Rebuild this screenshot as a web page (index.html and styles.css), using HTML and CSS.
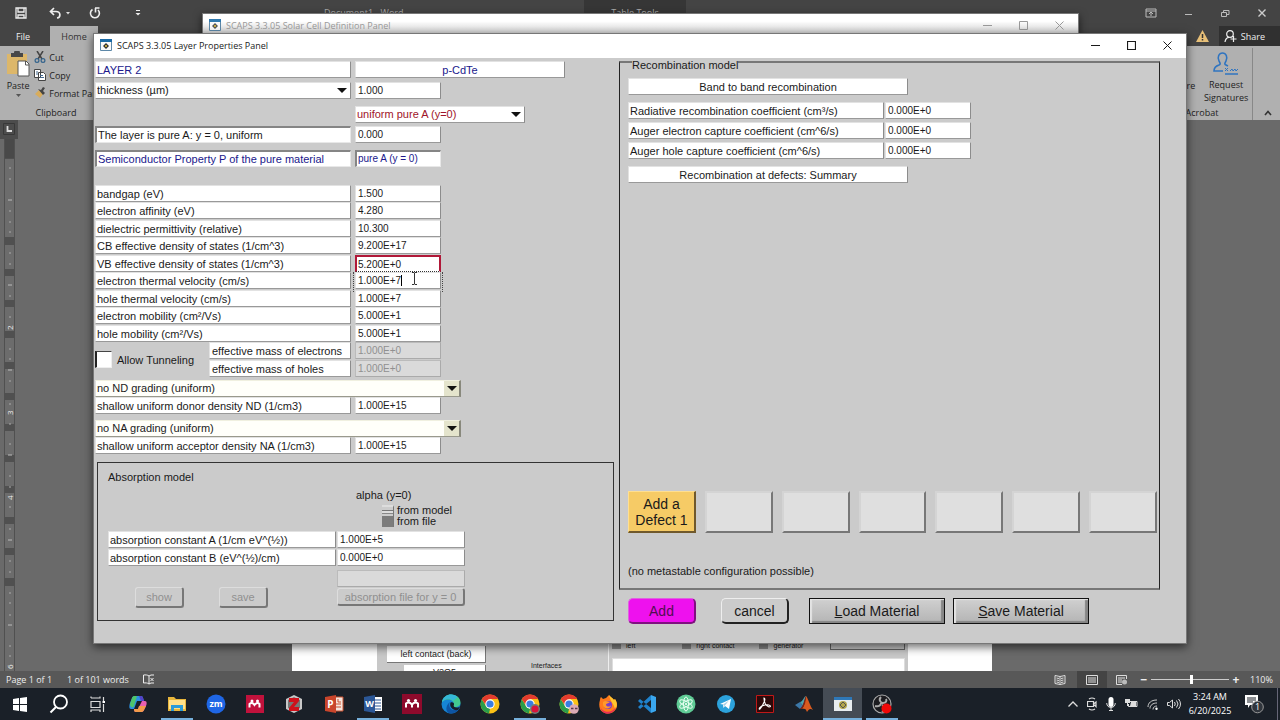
FILE: index.html
```html
<!DOCTYPE html>
<html lang="en">
<head>
<meta charset="utf-8">
<title>SCAPS 3.3.05 Layer Properties Panel</title>
<link rel="stylesheet" href="styles.css">
</head>
<body>
<div class="desktop">
  <div class="word">
    <header class="word-title">
      <div class="quick">
        <button class="ico" aria-label="Save file"><svg width="12" height="12" viewBox="0 0 12 12"><path d="M1 1h10v10H1zM3 1v4h6V1M3 11V8h6v3" fill="none" stroke="#eee" stroke-width="1.3"/></svg></button>
        <button class="ico" aria-label="Undo"><svg width="22" height="12" viewBox="0 0 22 12"><path d="M5 1 1.500 4.500 5 8M2 4.500h5c5 0 5 6 1 6.500" fill="none" stroke="#eee" stroke-width="1.700"/><path d="M17 5h4l-2 2.500z" fill="#ddd"/></svg></button>
        <button class="ico" aria-label="Redo"><svg width="12" height="12" viewBox="0 0 12 12"><path d="M3.500 2.500A4.500 4.500 0 1 0 9 3M6 1h4.500M6.500 1v4.500" fill="none" stroke="#eee" stroke-width="1.600"/></svg></button>
        <button class="ico more" aria-label="More commands"><svg width="6" height="8" viewBox="0 0 6 8"><path d="M1 1.500h4" stroke="#eee"/><path d="M.5 4h5L3 6.500z" fill="#eee"/></svg></button>
      </div>
      <div class="doc-name">Document1 - Word</div>
      <div class="table-tools">Table Tools</div>
      <div class="word-controls">
        <button class="ico" aria-label="Ribbon options"><svg width="12" height="10" viewBox="0 0 12 10"><path d="M1 1h10v8H1zM1 3h10M6 8V4.500M4 6l2-2 2 2" fill="none" stroke="#bbb"/></svg></button>
        <button class="ico" aria-label="Minimize Word"><svg width="8" height="10" viewBox="0 0 8 10"><path d="M0 6.500h7" stroke="#bbb"/></svg></button>
        <button class="ico" aria-label="Restore Word"><svg width="9" height="9" viewBox="0 0 9 9"><path d="M.5 3.500h5v4h-5zM2.500 3V1.500h5.500v4H6" fill="none" stroke="#bbb"/></svg></button>
        <button class="ico" aria-label="Close Word"><svg width="8" height="8" viewBox="0 0 8 8"><path d="m.5.5 7 7m0-7-7 7" stroke="#ccc" stroke-width="1.400"/></svg></button>
      </div>
    </header>
    <nav class="tabs">
      <button class="tab">File</button>
      <button class="tab on">Home</button>
      <span class="grow"></span>
      <svg class="warn" width="13" height="12" viewBox="0 0 13 12"><path d="M6.500 0 13 12H0z" fill="#e8c078"/><path d="M6.500 4v4M6.500 9v1.500" stroke="#333" stroke-width="1.500"/></svg>
      <button class="share"><svg width="13" height="12" viewBox="0 0 13 12"><circle cx="6" cy="4" r="3.300" fill="none" stroke="#eee" stroke-width="1.200"/><path d="M1 12c.4-3 2-4.500 4-4.700M9.500 6v6M6.500 9h6" stroke="#eee" stroke-width="1.200" fill="none"/></svg>Share</button>
    </nav>
    <div class="ribbon">
      <div class="clipboard">
        <div class="clip-body">
          <button class="paste"><svg width="24" height="26" viewBox="0 0 24 26"><path d="M1 3h20v20H1z" fill="#ddb76a"/><path d="M5 2h3a3 3 0 0 1 6 0h3v4H5z" fill="#484848"/><path d="M12 10h8l3 3v12H12z" fill="#fff" stroke="#555"/><path d="M19.500 10v4H23" fill="none" stroke="#555"/></svg><span>Paste</span><svg width="5" height="4" viewBox="0 0 5 4"><path d="M0 0h5L2.500 3z" fill="#555"/></svg></button>
          <div class="clip-list">
            <button><svg width="12" height="12" viewBox="0 0 12 12"><path d="m3 0 5 8M9 0 4 8" stroke="#444" stroke-width="1.500"/><circle cx="3" cy="9.500" r="1.900" fill="none" stroke="#33638c" stroke-width="1.200"/><circle cx="9" cy="9.500" r="1.900" fill="none" stroke="#33638c" stroke-width="1.200"/></svg>Cut</button>
            <button><svg width="12" height="12" viewBox="0 0 12 12"><path d="M.5.5h6v8h-6zM4.500 3.500h5l2 2v6h-7z" fill="#fff" stroke="#444"/><path d="M6 6.500h3M6 8.500h4M2 3h2M2 5h2" stroke="#446a90"/></svg>Copy</button>
            <button><svg width="12" height="12" viewBox="0 0 12 12"><path d="M1 7 5 3l4 4-3 4z" fill="#d8ac5c"/><path d="m4 2 5 6 2-2-2-2 2-3-2-1-2 3z" fill="#444"/></svg>Format Painter</button>
          </div>
        </div>
        <div class="caption">Clipboard</div>
      </div>
      <div class="acrobat">
        <div class="acro-body">
          <div class="cut-word">Share</div>
          <button class="request"><svg width="26" height="24" viewBox="0 0 26 24"><path d="M10 19H1c0-4 2-5 5-6 2-1 1-2 0-4-2-4 0-8 3.500-8S15 5 13 9c-1 2-2 3 0 4l2 1M12 22h13" fill="none" stroke="#2f74c0" stroke-width="1.600"/><path d="m12 16 3 3m0-3-3 3m5 0 2-2 1 2 2-2 1 2 2-2" fill="none" stroke="#2f74c0"/></svg><span>Request<br>Signatures</span></button>
        </div>
        <div class="caption">Acrobat</div>
      </div>
      <div class="ribbon-end"><svg width="8" height="6" viewBox="0 0 8 6"><path d="m1 5 3-3.500L7 5" fill="none" stroke="#333" stroke-width="1.600"/></svg></div>
    </div>
    <div class="doc">
      <div class="ruler">
        <div class="corner"><svg width="12" height="12" viewBox="0 0 12 12"><path d="M.5.5h11v11H.5z" fill="none" stroke="#383838"/><path d="M4.500 3v5H9" fill="none" stroke="#ddd" stroke-width="1.800"/></svg></div>
        <svg width="11" height="532" viewBox="0 0 11 532">
          <path d="M0 0h11v532H0z" fill="#505050"/><path d="M1 0h9v19H1z" fill="#494949"/>
          <path d="M1 20h9v78H1zM1 106h9v24H1zM1 137h9v24H1zM1 168h9v24H1zM1 199h9v24H1zM1 230h9v24H1zM1 261h9v24H1zM1 292h9v24H1zM1 323h9v24H1zM1 354h9v24H1zM1 385h9v24H1zM1 416h9v23H1zM1 447h9v85H1z" fill="#6c6c6c"/>
          <path d="M5 29h2M5 40h2M5 72h2M5 83h2M5 93h2M5 114h2M5 125h2M5 157h2M5 178h2M5 210h2M5 220h2M5 242h2M5 265h2M5 285h2M5 305h2M5 337h2M5 348h2M5 368h2M5 390h2M5 422h2M5 433h2M5 454h2M5 464h2M5 476h2M5 507h2M5 517h2" stroke="#aaa"/>
          <path d="M4 61h4M4 146h4M4 231h4M4 316h4M4 401h4M4 486h4" stroke="#bbb"/>
          <g fill="#eee" font-family="Open Sans, sans-serif" font-size="8"><text transform="translate(9 191) rotate(-90)">2</text><text transform="translate(9 276) rotate(-90)">3</text><text transform="translate(9 361) rotate(-90)">4</text><text transform="translate(9 530) rotate(-90)">6</text></g>
        </svg>
      </div>
      <div class="page">
        <div class="figure">
          <div class="fig-contacts"><span>left contact (back)</span><span class="short">V2O5</span></div>
          <div class="fig-mid">Interfaces</div>
          <div class="fig-right">
            <div class="fig-checks"><i></i>left<i></i>right contact<i></i>generator<b></b></div>
            <div class="fig-box"></div>
          </div>
        </div>
      </div>
    </div>
    <footer class="status">
      <span class="pages">Page 1 of 1</span><span>1 of 101 words</span>
      <svg class="proof" width="12" height="11" viewBox="0 0 12 11"><path d="M6 2C4.500.8 2.500.8.5 1v8c2-.3 4-.2 5.500 1V2l2-1h3M6 10l2-1h3M7.500 4l3 3m0-3-3 3" fill="none" stroke="#eee"/></svg>
      <span class="grow"></span>
      <button class="view" aria-label="Read mode"><svg width="12" height="10" viewBox="0 0 12 10"><path d="M6 1.500 1 .5v8l5 1 5-1v-8zv8M2.500 3 5 3.500M2.500 5 5 5.500M2.500 7 5 7.500M9.500 3 7 3.500M9.500 5 7 5.500M9.500 7 7 7.500" fill="none" stroke="#ddd"/></svg></button>
      <button class="view on" aria-label="Print layout"><svg width="12" height="10" viewBox="0 0 12 10"><path d="M.5.5h11v9H.5zM2 3h8M2 5h8M2 7h8" fill="none" stroke="#ddd"/></svg></button>
      <button class="view" aria-label="Web layout"><svg width="12" height="10" viewBox="0 0 12 10"><path d="M10.500 4V.5H.5v9H6M2 3h7M2 5h4M2 7h4" fill="none" stroke="#ddd"/><circle cx="8.500" cy="7" r="2.500" fill="#bbb"/></svg></button>
      <span class="sign">−</span><input class="zoom" type="range" min="0" max="100" value="52" aria-label="Zoom"><span class="sign">+</span><span class="pct">110%</span>
    </footer>
  </div>

  <section class="win back" aria-label="Solar Cell Definition Panel">
    <div class="bar">
      <svg width="12" height="12" viewBox="0 0 12 12"><path d="M.5.5h11v11H.5z" fill="#fafafa" stroke="#5d88a8"/><path d="M0 0h12v3H0z" fill="#2f79ae"/><path d="m6 4 3 3-3 3-3-3z" fill="#555"/><circle cx="6" cy="7" r="1" fill="#e8c840"/></svg>
      <h2>SCAPS 3.3.05 Solar Cell Definition Panel</h2>
      <div class="ctl"><button aria-label="Minimize panel"><svg width="9" height="9" viewBox="0 0 9 9"><path d="M0 4.500h9" stroke="currentColor"/></svg></button><button aria-label="Maximize panel"><svg width="9" height="9" viewBox="0 0 9 9"><path d="M.5.5h8v8h-8z" fill="none" stroke="currentColor"/></svg></button><button aria-label="Close panel"><svg width="9" height="9" viewBox="0 0 9 9"><path d="m.5.5 8 8m0-8-8 8" stroke="currentColor"/></svg></button></div>
    </div>
  </section>

  <section class="win front" aria-label="Layer Properties Panel">
    <div class="bar">
      <svg width="12" height="12" viewBox="0 0 12 12"><path d="M.5.5h11v11H.5z" fill="#fafafa" stroke="#5d88a8"/><path d="M0 0h12v3H0z" fill="#1a6aa5"/><path d="m6 4 3 3-3 3-3-3z" fill="#333"/><circle cx="6" cy="7" r="1" fill="#e8c840"/></svg>
      <h1>SCAPS 3.3.05 Layer Properties Panel</h1>
      <div class="ctl"><button aria-label="Minimize"><svg width="9" height="9" viewBox="0 0 9 9"><path d="M0 4.500h9" stroke="currentColor"/></svg></button><button aria-label="Maximize"><svg width="9" height="9" viewBox="0 0 9 9"><path d="M.5.5h8v8h-8z" fill="none" stroke="currentColor" stroke-width="1.200"/></svg></button><button aria-label="Close"><svg width="9" height="9" viewBox="0 0 9 9"><path d="m.5.5 8 8m0-8-8 8" stroke="currentColor"/></svg></button></div>
    </div>
    <div class="body">
      <form class="left">
        <div class="row name"><label class="cell blue" for="lname">LAYER 2</label><input class="cell blue center" id="lname" value="p-CdTe"></div>
        <div class="row thick"><span class="drop"><select class="cell" aria-label="Thickness unit"><option>thickness (µm)</option></select></span><input class="cell" aria-label="Thickness" value="1.000"></div>
        <div class="row comp"><span></span><span class="drop wide"><select class="cell red" aria-label="Composition"><option>uniform pure A (y=0)</option></select></span></div>
        <div class="row ylay"><label class="cell inset" for="y">The layer is pure A: y = 0, uniform</label><input class="cell" id="y" value="0.000"></div>
        <div class="row semi"><div class="cell inset blue">Semiconductor Property P of the pure material</div><div class="cell inset blue value">pure A (y = 0)</div></div>
        <div class="props">
          <div class="row"><label class="cell" for="p1">bandgap (eV)</label><input class="cell" id="p1" value="1.500"></div>
          <div class="row"><label class="cell" for="p2">electron affinity (eV)</label><input class="cell" id="p2" value="4.280"></div>
          <div class="row"><label class="cell" for="p3">dielectric permittivity (relative)</label><input class="cell" id="p3" value="10.300"></div>
          <div class="row"><label class="cell" for="p4">CB effective density of states (1/cm^3)</label><input class="cell" id="p4" value="9.200E+17"></div>
          <div class="row"><label class="cell" for="p5">VB effective density of states (1/cm^3)</label><input class="cell marked" id="p5" value="5.200E+0"></div>
          <div class="row"><label class="cell" for="p6">electron thermal velocity (cm/s)</label><span class="active"><input class="cell" id="p6" value="1.000E+7"><i class="caret"></i><svg class="ibeam" width="7" height="13" viewBox="0 0 7 13"><path d="M1 .5h2l.5 1 .5-1h2M3.500 1v11M1 12.500h2l.5-1 .5 1h2" fill="none" stroke="#333"/></svg></span></div>
          <div class="row"><label class="cell" for="p7">hole thermal velocity (cm/s)</label><input class="cell" id="p7" value="1.000E+7"></div>
          <div class="row"><label class="cell" for="p8">electron mobility (cm²/Vs)</label><input class="cell" id="p8" value="5.000E+1"></div>
          <div class="row"><label class="cell" for="p9">hole mobility (cm²/Vs)</label><input class="cell" id="p9" value="5.000E+1"></div>
        </div>
        <div class="tunnel">
          <label class="allow"><input type="checkbox">Allow Tunneling</label>
          <div class="masses">
            <div class="mrow"><label class="cell" for="m1">effective mass of electrons</label><input class="cell" id="m1" value="1.000E+0" disabled></div>
            <div class="mrow"><label class="cell" for="m2">effective mass of holes</label><input class="cell" id="m2" value="1.000E+0" disabled></div>
          </div>
        </div>
        <div class="grading">
          <span class="drop cream"><select class="cell" aria-label="ND grading"><option>no ND grading (uniform)</option></select></span>
          <div class="row"><label class="cell" for="nd">shallow uniform donor density ND (1/cm3)</label><input class="cell" id="nd" value="1.000E+15"></div>
        </div>
        <div class="grading">
          <span class="drop cream"><select class="cell" aria-label="NA grading"><option>no NA grading (uniform)</option></select></span>
          <div class="row"><label class="cell" for="na">shallow uniform acceptor density NA (1/cm3)</label><input class="cell" id="na" value="1.000E+15"></div>
        </div>
        <section class="absorb">
          <h3>Absorption model</h3>
          <div class="alpha">
            <span>alpha (y=0)</span>
            <div class="switch"><input type="checkbox" id="sw" checked><label for="sw">from model<br>from file</label></div>
          </div>
          <div class="agrid">
            <label class="cell" for="aa">absorption constant A (1/cm eV^(½))</label><input class="cell" id="aa" value="1.000E+5">
            <label class="cell" for="ab">absorption constant B (eV^(½)/cm)</label><input class="cell" id="ab" value="0.000E+0">
          </div>
          <div class="afoot">
            <div class="abtns"><button type="button" class="soft" disabled>show</button><button type="button" class="soft" disabled>save</button></div>
            <div class="afile"><input class="cell" aria-label="Absorption file" disabled><button type="button" class="soft" disabled>absorption file for y = 0</button></div>
          </div>
        </section>
      </form>
      <div class="right">
        <fieldset>
          <legend>Recombination model</legend>
          <div class="cell center head">Band to band recombination</div>
          <div class="rgrid">
            <label class="cell" for="r1">Radiative recombination coefficient (cm³/s)</label><input class="cell" id="r1" value="0.000E+0">
            <label class="cell" for="r2">Auger electron capture coefficient (cm^6/s)</label><input class="cell" id="r2" value="0.000E+0">
            <label class="cell" for="r3">Auger hole capture coefficient (cm^6/s)</label><input class="cell" id="r3" value="0.000E+0">
          </div>
          <div class="cell center head">Recombination at defects: Summary</div>
          <div class="defects">
            <button class="add-defect">Add a Defect 1</button>
            <button disabled aria-label="Defect 2"></button><button disabled aria-label="Defect 3"></button><button disabled aria-label="Defect 4"></button><button disabled aria-label="Defect 5"></button><button disabled aria-label="Defect 6"></button><button disabled aria-label="Defect 7"></button>
          </div>
          <p>(no metastable configuration possible)</p>
        </fieldset>
        <div class="actions">
          <button class="round add">Add</button><button class="round">cancel</button><button class="big"><u>L</u>oad Material</button><button class="big"><u>S</u>ave Material</button>
        </div>
      </div>
    </div>
  </section>

  <footer class="taskbar">
    <div class="apps">
      <button aria-label="Start"><svg viewBox="0 0 20 20"><path d="M3 5l6-1v6H3zM10 4l7-1v7h-7zM3 11h6v6l-6-1zM10 11h7v7l-7-1z" fill="#fff"/></svg></button>
      <button aria-label="Search"><svg viewBox="0 0 20 20"><circle cx="11.500" cy="8" r="6.500" fill="none" stroke="#fff" stroke-width="1.800"/><path d="m7 13-5.500 5.500" stroke="#fff" stroke-width="2"/></svg></button>
      <button aria-label="Task view"><svg viewBox="0 0 20 20"><path d="M3 4V2.500M3 4h9V2.500M3 7.500h9v6H3zM3 18v-2h9v2M15.500 3v4M15.500 10v8" fill="none" stroke="#ddd" stroke-width="1.200"/><path d="M14.500 7h2.500v2h-2.500z" fill="#fff"/></svg></button>
      <button aria-label="Copilot"><svg viewBox="0 0 20 20"><path d="M7 2h6c2 0 2 2 3 5H9l-3 8H3c-2 0-2-3-1-6l2-5c.6-1.400 1.500-2 3-2z" fill="#2b8fe0"/><path d="M2 10 4 4c.6-1.400 1.500-2 3-2h2L6 12c-.5 2-4 2-4-2z" fill="#4fc46a"/><path d="M14 7h3c2 0 2 3 1 5l-2 4c-.7 1.500-1.500 2-3 2H8c-2 0-2-2-2-3h4z" fill="#e95fb0"/><path d="m10 15 1-3h7l-2 4c-.7 1.500-1.500 2-3 2H8c-2 0-2-2-2-3z" fill="#f39a4a"/><path d="M11 2h2c2 0 2 2 3 5h-3z" fill="#5442c8"/></svg></button>
      <button class="open" aria-label="File Explorer"><svg viewBox="0 0 20 20"><path d="M1 3h6l2 2h10v12H1z" fill="#e8b63c"/><path d="M2 6h16v9H2z" fill="#ffe08a"/><path d="M4 17v-6h12v6h-3v-3H7v3z" fill="#2b9bd8"/></svg></button>
      <button aria-label="Zoom"><svg viewBox="0 0 20 20"><circle cx="10" cy="10" r="9.500" fill="#1f66e5"/><text x="10" y="13" text-anchor="middle" font-size="9" font-weight="bold" fill="#fff">zm</text></svg></button>
      <button aria-label="Mendeley"><svg viewBox="0 0 20 20"><path d="M1 1h18v18H1z" fill="#c1123c"/><path d="M4.500 13.500V10q2.700-2.500 5 1 2.700-3.500 5-1v3.500" fill="none" stroke="#fff" stroke-width="2"/><circle cx="7" cy="7" r="1.500" fill="#fff"/><circle cx="12.500" cy="7" r="1.500" fill="#fff"/></svg></button>
      <button aria-label="Zotero"><svg viewBox="0 0 20 20"><path d="m10 1 8 4v10l-8 4-8-4V5z" fill="#c8c8c8"/><path d="m4 6 6-3 6 3v8l-6 3-6-3z" fill="#777"/><path d="M5 4h10v3l-5 6h5v4H5v-3l5-6H5z" fill="#cf111b"/></svg></button>
      <button aria-label="PowerPoint"><svg viewBox="0 0 20 20"><path d="M10 3h9v14h-9z" fill="#f4e4dc" stroke="#c9502f"/><path d="M12 10h5M12 13h5M14 5v3h3" stroke="#c9502f" fill="none"/><path d="m1 3 11-2v18L1 17z" fill="#c9452b"/><text x="6.500" y="13.500" text-anchor="middle" font-size="10" font-weight="bold" fill="#fff">P</text></svg></button>
      <button class="open" aria-label="Word"><svg viewBox="0 0 20 20"><path d="M10 3h9v14h-9z" fill="#fff"/><path d="M12 6h6M12 9h6M12 12h6M12 15h6" stroke="#2b5797"/><path d="m1 3 11-2v18L1 17z" fill="#2b5797"/><text x="6.500" y="13" text-anchor="middle" font-size="9" font-weight="bold" fill="#fff">W</text></svg></button>
      <button aria-label="Mendeley Desktop"><svg viewBox="0 0 20 20"><path d="M0 0h20v20H0z" fill="#8e0a2c"/><path d="M4 13.500v-4q3-2.500 6 1 3-3.500 6-1v4M10 10v3.500" fill="none" stroke="#fff" stroke-width="2"/><circle cx="6.500" cy="6.500" r="1.600" fill="#fff"/><circle cx="13.500" cy="6.500" r="1.600" fill="#fff"/></svg></button>
      <button aria-label="Edge"><svg viewBox="0 0 20 20"><circle cx="10" cy="10" r="9.500" fill="#1685d4"/><path d="M1 8C2 3 6 .5 10 .5c6 0 9.500 4 9.500 8 0 3-2.500 4.500-5 4.500-3 0-2-2-1.500-3 0-3-4-5-7-4.500C3 6 1 8 1 8z" fill="#43c98f"/><path d="M1 8c1-5 5-7.500 9-7.500 3 0 5 1 6.500 2.500L12 7C8 3 4 5 1 8z" fill="#35b7d8"/><path d="M9 8c-2 3 0 8 4 8 2 0 4-.5 5-1-2 3-5 4.500-8 4.500-6 0-6-8-1-11.500z" fill="#0d55a5"/><path d="M9.500 8.500c2-1 4 .5 3.500 2-1 2 0 3 3 3 1.500 0 3-.6 3.500-1.500L17 16c-5 1-9-3-7.500-7.500z" fill="#171e27"/></svg></button>
      <button aria-label="Chrome"><svg viewBox="0 0 20 20"><circle cx="10" cy="10" r="9.500" fill="#fbc116"/><path d="M1.800 5.200 6 12l4 3-1 4.500A9.500 9.500 0 0 1 1.800 5.200z" fill="#2a9d4b"/><path d="M1.800 5.200 6 11l4-6h8.200A9.500 9.500 0 0 0 1.800 5.200z" fill="#e33b2e"/><circle cx="10" cy="10" r="4.700" fill="#fff"/><circle cx="10" cy="10" r="3.600" fill="#3b7de0"/></svg></button>
      <button class="open" aria-label="Chrome, recording"><svg viewBox="0 0 20 20"><circle cx="10" cy="10" r="9.500" fill="#fbc116"/><path d="M1.800 5.200 6 12l4 3-1 4.500A9.500 9.500 0 0 1 1.800 5.200z" fill="#2a9d4b"/><path d="M1.800 5.200 6 11l4-6h8.200A9.500 9.500 0 0 0 1.800 5.200z" fill="#e33b2e"/><circle cx="10" cy="10" r="4.700" fill="#fff"/><circle cx="10" cy="10" r="3.600" fill="#3b7de0"/><circle cx="15" cy="15" r="5" fill="#6f7f7c"/><circle cx="15" cy="15" r="3.600" fill="#d8143c"/></svg></button>
      <button aria-label="Chrome, profile"><svg viewBox="0 0 20 20"><circle cx="10" cy="10" r="9.500" fill="#fbc116"/><path d="M1.800 5.200 6 12l4 3-1 4.500A9.500 9.500 0 0 1 1.800 5.200z" fill="#2a9d4b"/><path d="M1.800 5.200 6 11l4-6h8.200A9.500 9.500 0 0 0 1.800 5.200z" fill="#e33b2e"/><circle cx="10" cy="10" r="4.700" fill="#fff"/><circle cx="10" cy="10" r="3.600" fill="#3b7de0"/><circle cx="15" cy="15" r="4.800" fill="#dcaab4"/><path d="M12 14.500h2.500M16 14.500h2.500" stroke="#553a50" stroke-width="1.500"/></svg></button>
      <button aria-label="Firefox"><svg viewBox="0 0 20 20"><path d="M2 6c0-2 1-3 1-3l2 2 3-1 3-3c1 2 4 3 5 5l1-1c2 3 3 7 1 10-4 7-14 5-16 0-1-3-1-6 0-9z" fill="#ff7a1c"/><path d="M11 1c1 2 4 3 5 5l1-1c2 3 3 7 0 10-1-5-5-8-6-14z" fill="#ffc62e"/><path d="M2 12c2 7 12 8 16 1-2 8-14 10-16-1z" fill="#ec2f55"/><circle cx="10" cy="11" r="4" fill="#7a3ac8"/><path d="M5 8c3-2 5 0 7 0-2 2-4 1-4 3 1 2 4 2 5 0 0 4-7 5-8 0z" fill="#ff9a2a"/></svg></button>
      <button aria-label="Visual Studio Code"><svg viewBox="0 0 20 20"><path d="m14 1 5 2v14l-5 2z" fill="#3aa7ef"/><path d="M14 1v5L3 15l-2-2zM14 19v-5L3 5 1 7z" fill="#1f82cc"/></svg></button>
      <button aria-label="Atom"><svg viewBox="0 0 20 20"><circle cx="10" cy="10" r="9.500" fill="#5fcb95"/><g fill="none" stroke="#e6fff0"><ellipse cx="10" cy="10" rx="2.500" ry="7"/><ellipse cx="10" cy="10" rx="2.500" ry="7" transform="rotate(60 10 10)"/><ellipse cx="10" cy="10" rx="2.500" ry="7" transform="rotate(-60 10 10)"/></g><circle cx="10" cy="10" r="1" fill="#fff"/></svg></button>
      <button aria-label="Telegram"><svg viewBox="0 0 20 20"><circle cx="10" cy="10" r="9" fill="#2ca2dc"/><path d="m4 10 11-5-2 10-4-3-1.500 2-.5-3.500z" fill="#fff"/><path d="m7 10.500 6-4-4.500 5.500z" fill="#a8cfe4"/></svg></button>
      <button aria-label="Acrobat Reader"><svg viewBox="0 0 20 20"><path d="M1.500 1.500h17v17h-17z" fill="#2d0a0a" stroke="#c01818"/><path d="M9 4c2 0 0 6-4 11-2 1 0-3 5-4s7 2 4 2c-3-1-5-5-5-9z" fill="none" stroke="#fff" stroke-width="1.200"/></svg></button>
      <button aria-label="MATLAB"><svg viewBox="0 0 20 20"><path d="m1 11 5-3 3 4-3 3z" fill="#3c78a8"/><path d="M6 8c3 0 4-6 6-6l-3 10z" fill="#4aa3b0"/><path d="M12 2c2 2 4 10 7 14-3-2-4-1-6 2-1-3-2-4-5-3 3-4 3-9 4-13z" fill="#d85a1f"/><path d="M12 2c0 5-1 9-4 13l-2 0c4-4 4-10 6-13z" fill="#7d2418"/></svg></button>
      <button class="open current" aria-label="SCAPS"><svg viewBox="0 0 20 20"><path d="M1 3h18v14H1z" fill="#e8edf0"/><path d="M1 3h18v3H1z" fill="#2e78b8"/><circle cx="10" cy="11" r="4" fill="#b3a54a"/><path d="m7 11 3-3 3 3-3 3z" fill="none" stroke="#555"/></svg></button>
      <button class="open" aria-label="OBS Studio"><svg viewBox="0 0 20 20"><circle cx="10" cy="10" r="9" fill="#1c1c20" stroke="#aaa" stroke-width="1.200"/><path d="M9 3c-3 3 0 6 2 6 3 0 4-2 3-4M3 12c4 1 6-1 6-3M10 18c3-2 2-6 0-7" fill="none" stroke="#aaa" stroke-width="2"/><circle cx="14.500" cy="14.500" r="5" fill="#f00808"/></svg></button>
    </div>
    <div class="tray">
      <svg width="10" height="6" viewBox="0 0 10 6"><path d="m.5 5.500 4.500-4.500 4.500 4.500" fill="none" stroke="#ddd" stroke-width="1.300"/></svg>
      <svg width="10" height="14" viewBox="0 0 10 14"><path d="M.5 4.500h6v5h-6zM6.500 7 9 5v4.500L6.500 7M2 2q3-2 6 0M2 12q3 2 6 0" fill="none" stroke="#ddd" stroke-width="1.200"/></svg>
      <svg width="10" height="14" viewBox="0 0 10 14"><rect x="2.500" y="0" width="5" height="10" rx="2.500" fill="#fff"/><path d="M.7 6c0 6 8.600 6 8.600 0M5 11v2.500M3 13.500h4" fill="none" stroke="#ddd"/></svg>
      <svg width="13" height="10" viewBox="0 0 13 10"><path d="M4 2.500h8v5H3.500V5" fill="none" stroke="#ddd"/><path d="M6 3h5v4H5zM0 0h5v4H3v3H2V4H0z" fill="#ddd"/></svg>
      <svg width="11" height="11" viewBox="0 0 11 11"><path d="M1 8C1 4 4 1 10 1M3 9.500C3 6 6 4 10 4M6 10.500C6 8 8 7 10 7" fill="none" stroke="#ccc"/><circle cx="9.500" cy="9.700" r="1.200" fill="#fff"/></svg>
      <svg width="14" height="12" viewBox="0 0 14 12"><path d="M.5 4.500h2L5.500 2v8L2.500 7.500h-2zM7.500 4q1.500 2 0 4M9.500 2.500q3 3.500 0 7M11.500 1q4 5 0 10" fill="none" stroke="#ddd"/></svg>
    </div>
    <div class="clock">3:24 AM<br>6/20/2025</div>
    <button class="notes" aria-label="Notifications"><svg width="20" height="20" viewBox="0 0 20 20"><path d="M1 1h13v10H6l-2 3v-3H1z" fill="#fff"/><path d="M3 4h9M3 6h9M3 8h6" stroke="#1b2129"/><circle cx="13.500" cy="13" r="5.800" fill="#30353c" stroke="#999"/><text x="13.500" y="16" text-anchor="middle" font-size="9" fill="#fff">1</text></svg></button>
  </footer>
</div>
</body>
</html>
```
FILE: styles.css
```css
* { box-sizing: border-box; }
body { margin: 0; font-family: "Liberation Sans", Arial, sans-serif; font-size: 11px; color: #1a1a1a; background: #6a6a6a; }
button, input, select { font: inherit; color: inherit; margin: 0; padding: 0; }
button { border: 0; background: none; }
svg { display: block; flex: none; }
h1, h2, h3, p { margin: 0; font-size: inherit; font-weight: normal; }
.grow { flex: 1; }
.desktop { position: relative; min-height: 100vh; display: flex; flex-direction: column; overflow: hidden; }

/* Word */
.word { flex: 1; display: flex; flex-direction: column; font-family: "Open Sans", "Noto Sans", sans-serif; font-size: 9px; }
.word-title { display: flex; height: 26px; background: #444; color: #aaa; line-height: 26px; }
.quick { display: flex; align-items: center; gap: 18px; padding-left: 15px; width: 324px; }
.quick .ico:nth-child(2) { margin-left: 4px; }
.quick .more { margin-left: 16px; }
.doc-name { width: 260px; }
.table-tools { width: 102px; background: #363636; text-align: center; }
.word-controls { flex: 1; display: flex; justify-content: flex-end; align-items: center; gap: 28px; padding-right: 14px; }
.tabs { display: flex; align-items: stretch; height: 20px; background: #444; color: #eee; }
.tab { width: 50px; padding-right: 4px; }
.tab.on { background: #b0b0b0; color: #333; width: 48px; padding: 0; }
.warn { align-self: center; margin-right: 10px; }
.share { display: flex; align-items: center; gap: 4px; background: #303030; padding: 0 15px 0 5px; }
.ribbon { display: flex; justify-content: space-between; height: 74px; background: #b0b0b0; color: #222; overflow: hidden; }
.clipboard { display: flex; flex-direction: column; width: 112px; }
.clip-body { display: flex; flex: 1; padding: 5px 0 0 6px; gap: 4px; }
.paste { display: flex; flex-direction: column; align-items: center; width: 30px; gap: 2px; }
.clip-list { display: flex; flex-direction: column; gap: 6px; }
.clip-list button { display: flex; align-items: center; gap: 3px; height: 12px; white-space: nowrap; }
.caption { text-align: center; line-height: 14px; }
.acrobat { margin-left: auto; width: 82px; border-right: 1px solid #888; margin-top: 2px; }
.acrobat .caption { width: 62px; }
.acro-body { display: flex; align-items: flex-start; gap: 5px; height: 58px; }
.cut-word { padding-top: 31px; line-height: 13px; }
.request { display: flex; flex-direction: column; align-items: center; gap: 2px; line-height: 13px; flex: 1; height: 56px; padding-top: 4px; }
.ribbon-end { width: 27px; padding: 64px 0 0 11px; }
.doc { flex: 1; display: flex; background: #6a6a6a; position: relative; overflow: hidden; }
.ruler { width: 292px; height: 551px; flex: none; padding-left: 4px; overflow: hidden; }
.corner { padding: 3px; margin-left: -4px; width: 18px; height: 19px; background: #4c4c4c; }
.page { width: 700px; background: #fff; display: flex; flex-direction: column; justify-content: flex-end; }
.figure { margin: 0 84px 0 85px; background: #c8c8c8; display: flex; height: 33px; overflow: hidden; font-family: "Liberation Sans", sans-serif; }
.fig-contacts { width: 109px; padding: 8px 0 0 10px; display: flex; flex-direction: column; gap: 2px; text-align: center; }
.fig-contacts span { background: #fff; border-right: 1px solid #777; border-bottom: 1px solid #777; font-size: 9px; line-height: 16px; flex: none; }
.fig-contacts .short { margin-left: 17px; line-height: 14px; }
.fig-mid { width: 122px; padding: 24px 0 0 45px; font-size: 7px; }
.fig-right { flex: 1; border-left: 1px solid #eee; padding: 2px 3px 0; }
.fig-checks { display: flex; gap: 5px; align-items: center; font-size: 7px; height: 10px; }
.fig-checks i { width: 9px; height: 8px; background: #888; }
.fig-checks i:nth-of-type(n+2) { margin-left: 42px; }
.fig-checks i:nth-of-type(3) { margin-left: 20px; }
.fig-checks b { flex: 1; margin-left: 22px; height: 10px; border: 1px solid #666; }
.fig-box { margin-top: 8px; height: 20px; background: #fff; border: 1px solid #ddd; }
.status { display: flex; align-items: center; height: 17px; background: #585858; color: #eee; padding-left: 6px; }
.pages { width: 61px; }
.proof { margin-left: 14px; }
.view { display: flex; justify-content: center; align-items: center; width: 30px; height: 17px; }
.view:first-of-type { margin-right: 2px; }
.view.on { background: #444; }
.sign { font-size: 12px; line-height: 17px; width: 14px; text-align: center; font-weight: bold; }
.zoom { appearance: none; width: 78px; height: 9px; background: linear-gradient(#ccc, #ccc) center / 100% 1px no-repeat; }
.zoom::-webkit-slider-thumb { appearance: none; width: 3px; height: 9px; background: #fff; }
.pct { width: 37px; text-align: center; }

/* Application windows */
.win { position: absolute; border: 1px solid #777; box-shadow: 0 3px 9px rgba(0,0,0,.6); }
.back { left: 202px; right: 201px; top: 13px; color: #999; }
.front { left: 93px; right: 93px; top: 33px; background: #cbcbcb; }
.bar { display: flex; align-items: center; gap: 5px; height: 24px; background: #fff; padding: 0 14px 2px 6px; font-family: "Open Sans", "Noto Sans", sans-serif; font-size: 9px; }
.back .bar { background: linear-gradient(#fff 30%, #ccc 85%); }
.ctl { display: flex; gap: 27px; margin-left: auto; }
.body { display: grid; grid-template-columns: 525fr 541fr; padding: 1px 26px 19px 0; }
.left { padding: 2px 0 3px 1px; min-width: 0; }
.right { display: flex; flex-direction: column; min-width: 0; }

.cell { display: block; width: 100%; height: 17px; line-height: 16px; padding: 0 1px; background: #fff; border: 1px solid #e2e2e2; border-right-color: #8c8c8c; border-bottom-color: #999; border-radius: 0; white-space: nowrap; overflow: hidden; outline: 0; }
.cell.inset { border: 2px solid #858585; border-right: 1px solid #e8e8e8; border-bottom: 1px solid #e8e8e8; padding: 0 1px; line-height: 14px; }
.cell:disabled { background: #dadada; color: #909090; border-color: #bbb #aaa #aaa #bbb; }
input.cell, .cell.value { font-size: 10px; padding: 0 2px; }
.cell.value { padding: 0 1px; }
.row.name .cell { font-size: 11px; }
.blue { color: #20188c; }
.red { color: #a01428; }
.cell.center { text-align: center; }
.row { display: grid; grid-template-columns: 256px 86px; column-gap: 4px; }
.name { grid-template-columns: 256px 210px; }
.thick { margin-top: 4px; }
.comp { grid-template-columns: 256px 170px; margin-top: 7px; }
.ylay { margin-top: 3px; }
.semi { margin-top: 7px; margin-bottom: 18px; }
.drop { position: relative; display: block; }
.drop select { appearance: none; padding: 0 1px; line-height: 15px; }
.drop::after { content: ""; position: absolute; right: 4px; top: 6px; border: 5px solid transparent; border-top-color: #111; border-bottom: 0; pointer-events: none; }
.cream { width: 366px; }
.cream select { border-color: #f0f0e0 #88887c #99998c #ddd; border-right-width: 2px; background: linear-gradient(#e4e4cc, #e4e4cc) right / 15px 100% no-repeat #fffffa; }
.props .row:nth-child(even) { margin-bottom: 1px; }
.cell.marked { position: relative; border: 2px solid #b01838; border-bottom: 1px dotted #333; padding: 0 1px; }
.active { position: relative; display: block; }
.active::before { content: ""; position: absolute; inset: 0 -2px -3px; border: 1px dotted #444; border-width: 0 1px; }
.caret { position: absolute; left: 46px; top: 3px; width: 1px; height: 11px; background: #000; }
.ibeam { position: absolute; left: 56px; top: 0; }
.tunnel { display: flex; gap: 1px; }
.allow { display: flex; align-items: center; gap: 5px; width: 113px; }
.allow input { appearance: none; width: 17px; height: 17px; background: #fff; border: 1px solid #eee; border-top-color: #444; border-left: 2px solid #222; }
.masses { width: 232px; }
.mrow { display: grid; grid-template-columns: 142px 86px; column-gap: 4px; }
.mrow + .mrow { margin-top: 1px; }
.mrow label { padding-left: 2px; }
.grading { margin-top: 3px; }
.grading + .grading { margin-top: 6px; }
.absorb { margin: 8px 5px 0 2px; border: 1px solid #333; padding: 7px 10px 12px; }
.absorb h3 { line-height: 14px; }
.alpha { padding-left: 248px; margin-top: 4px; line-height: 14px; }
.switch { display: flex; gap: 3px; padding-left: 26px; line-height: 11px; margin-top: 3px; }
.switch input { appearance: none; width: 12px; height: 22px; border-top: 2px solid #ddd; background: linear-gradient(#ccc 0 3px, #777 3px 4px, #ddd 4px 6px, #888 6px 7px, #ccc 7px 9px, #7c7c7c 9px); border-right: 1px solid #777; }
.agrid { display: grid; grid-template-columns: 228px 128px; column-gap: 1px; row-gap: 1px; margin-top: 4px; }
.afoot { display: flex; margin-top: 4px; gap: 1px; }
.abtns { width: 228px; display: flex; align-items: flex-start; gap: 35px; padding: 17px 0 0 27px; }
.abtns .soft { width: 49px; height: 21px; }
.afile { width: 128px; display: flex; flex-direction: column; gap: 1px; }
.afile .soft { height: 18px; white-space: nowrap; }
.soft { color: #909090; border: 1px solid #ddd; border-right: 2px solid #777; border-bottom: 2px solid #777; border-radius: 3px; background: #cbcbcb; }

fieldset { flex: 1; display: flex; flex-direction: column; min-width: 0; margin: -6px 0 0; padding: 7px 2px 10px 8px; border: 1px solid #222; border-top: 2px solid #777; border-bottom: 2px solid #777; }
legend { margin-left: 4px; padding: 6px 0 0; line-height: 12px; }
.head { width: 280px; }
.rgrid { display: grid; grid-template-columns: 256px 86px; column-gap: 1px; row-gap: 3px; margin: 7px 0; }
.defects { display: grid; grid-template-columns: repeat(7, 1fr); column-gap: 9px; margin-top: auto; }
.defects button { height: 42px; background: #dfdfdf; border: 2px solid #d4d4d4; border-right-color: #777; border-bottom-color: #777; }
.defects .add-defect { background: #f6cb66; border: 1px solid #ffdf90; border-right: 2px solid #70592c; border-bottom: 2px solid #70592c; font-size: 14px; line-height: 16px; }
fieldset p { margin-top: 31px; line-height: 14px; }
.actions { display: flex; align-items: center; gap: 8px; padding-left: 9px; margin-top: 8px; font-size: 14px; }
.round { width: 68px; height: 26px; border: 1px solid #eee; border-right: 2px solid #222; border-bottom: 2px solid #222; border-radius: 5px; background: #cbcbcb; margin-right: 12px; }
.round.add { background: #ee11ee; color: #501050; border-color: #e060e0 #801080 #801080 #e060e0; margin-right: 17px; }
.big { width: 136px; height: 26px; border: 1px solid #111; background: linear-gradient(#d0d0d0, #b4b4b4); box-shadow: inset 2px 1px 1px #e4e4e4, inset -3px -2px 1px #858585; }

/* Taskbar */
.taskbar { position: relative; display: flex; height: 32px; background: #1a2028; color: #fff; font-family: "Open Sans", "Noto Sans", sans-serif; }
.apps { display: flex; flex: 1; }
.apps button { width: 39px; display: flex; justify-content: center; align-items: center; flex: none; }
.apps button:nth-child(5n+3) { margin-right: 1px; }
.apps svg { width: 20px; height: 20px; }
.apps .open { background: linear-gradient(#76b0dc, #76b0dc) bottom / 32px 2px no-repeat; }
.apps .current { background: linear-gradient(#76b0dc, #76b0dc) bottom / 100% 2px no-repeat #454c55; }
.tray { display: flex; align-items: center; gap: 9px; margin-right: 6px; }
.clock { width: 46px; text-align: center; font-size: 9px; line-height: 14px; padding-top: 2px; }
.notes { width: 45px; padding-left: 11px; border-right: 1px solid #667; margin-right: 2px; }
```
